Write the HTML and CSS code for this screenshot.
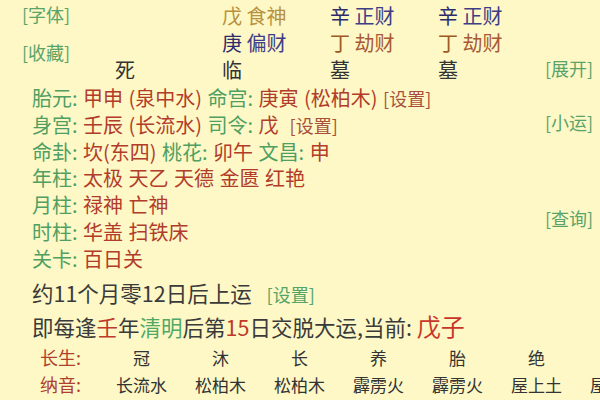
FILE: index.html
```html
<!DOCTYPE html>
<html lang="zh">
<head>
<meta charset="utf-8">
<link rel="stylesheet" href="styles.css">
</head>
<body>
<div class="upper">
  <div class="main">
    <div class="pillars">
      <div class="side">
        <span class="btn">[字体]</span>
        <span class="btn shou">[收藏]</span>
      </div>
      <div class="cell c2 r1"><span class="tan">戊 食神</span></div>
      <div class="cell c3 r1"><span class="navy">辛</span> <span class="navy2">正财</span></div>
      <div class="cell c4 r1"><span class="navy">辛</span> <span class="navy2">正财</span></div>
      <div class="cell c2 r2"><span class="navy">庚</span> <span class="navy2">偏财</span></div>
      <div class="cell c3 r2"><span class="ding">丁</span> <span class="jie">劫财</span></div>
      <div class="cell c4 r2"><span class="ding">丁</span> <span class="jie">劫财</span></div>
      <div class="cell c1 r3 dark">死</div>
      <div class="cell c2 r3 dark">临</div>
      <div class="cell c3 r3 dark">墓</div>
      <div class="cell c4 r3 dark">墓</div>
    </div>
    <div class="info">
      <div class="row"><span class="lb">胎元:</span> <span class="val">甲申 (泉中水)</span> <span class="lb">命宫:</span> <span class="val">庚寅 (松柏木)</span> <span class="set">[设置]</span></div>
      <div class="row"><span class="lb">身宫:</span> <span class="val">壬辰 (长流水)</span> <span class="lb">司令:</span> <span class="val">戊</span>&nbsp; <span class="set">[设置]</span></div>
      <div class="row"><span class="lb">命卦:</span> <span class="val">坎(东四)</span> <span class="lb">桃花:</span> <span class="val">卯午</span> <span class="lb">文昌:</span> <span class="val">申</span></div>
      <div class="row"><span class="lb">年柱:</span> <span class="val">太极 天乙 天德 金匮 红艳</span></div>
      <div class="row"><span class="lb">月柱:</span> <span class="val">禄神 亡神</span></div>
      <div class="row"><span class="lb">时柱:</span> <span class="val">华盖 扫铁床</span></div>
      <div class="row"><span class="lb">关卡:</span> <span class="val">百日关</span></div>
    </div>
  </div>
  <div class="aside">
    <span class="btn zk">[展开]</span>
    <span class="btn xy">[小运]</span>
    <span class="btn cx">[查询]</span>
  </div>
</div>
<div class="yun">
  <div class="line">约11个月零12日后上运 <span class="gset">[设置]</span></div>
  <div class="line">即每逢<span class="red">壬</span>年<span class="grn">清明</span>后第<span class="red">15</span>日交脱大运,当前: <span class="cur">戊子</span></div>
</div>
<div class="table">
  <div class="tl">长生:</div>
  <div class="td">冠</div><div class="td">沐</div><div class="td">长</div><div class="td">养</div><div class="td">胎</div><div class="td">绝</div><div class="td"></div>
  <div class="tl">纳音:</div>
  <div class="td">长流水</div><div class="td">松柏木</div><div class="td">松柏木</div><div class="td">霹雳火</div><div class="td">霹雳火</div><div class="td">屋上土</div><div class="td">屋上土</div>
</div>
</body>
</html>
```

FILE: styles.css
```css
html, body {
  margin: 0;
  padding: 0;
  overflow: hidden;
}
body {
  width: 600px;
  height: 400px;
  background: #fdf8c6;
  font-family: "Noto Sans CJK SC", "Noto Sans", sans-serif;
  font-size: 20px;
  color: #333;
}
.upper {
  display: flex;
}
.main {
  width: 545px;
  flex: none;
}
.pillars {
  display: grid;
  grid-template-columns: 115px 107px 108px 108px 107px;
  grid-template-rows: 27px 27px 28px;
  padding-top: 2px;
  line-height: 27px;
}
.side {
  grid-column: 1;
  grid-row: 1 / span 3;
  display: flex;
  flex-direction: column;
  align-items: flex-start;
  padding-left: 22px;
}
.btn {
  color: #5aa46a;
  font-size: 18px;
  line-height: 24px;
}
.shou {
  margin-top: 14px;
}
.cell { white-space: nowrap; }
.c1 { grid-column: 2; }
.c2 { grid-column: 3; }
.c3 { grid-column: 4; }
.c4 { grid-column: 5; }
.r1 { grid-row: 1; }
.r2 { grid-row: 2; }
.r3 { grid-row: 3; }
.tan { color: #b8913e; }
.navy { color: #2c2c6c; }
.navy2 { color: #3e3e86; }
.ding { color: #9c5a22; }
.jie { color: #a85a36; }
.dark { color: #333; }
.info {
  padding-left: 32px;
  padding-top: 1px;
}
.row {
  line-height: 26.8px;
  white-space: nowrap;
  word-spacing: 1px;
}
.lb { color: #4f9f62; }
.val { color: #b23c2a; }
.set { color: #a9503c; font-size: 18px; }
.aside {
  display: flex;
  flex-direction: column;
  align-items: flex-start;
  padding-top: 56px;
}
.xy { margin-top: 30px; }
.cx { margin-top: 72px; }
.yun {
  padding-left: 32px;
  margin-top: 4px;
  font-size: 21.5px;
  color: #3a3a3a;
}
.line {
  line-height: 31px;
  white-space: nowrap;
}
.gset { color: #55a467; font-size: 18px; margin-left: 10px; }
.red { color: #c0392b; }
.grn { color: #4fa866; }
.cur { color: #c8362a; font-size: 24px; }
.table {
  display: grid;
  grid-template-columns: 62px repeat(7, 79px);
  grid-auto-rows: 27px;
  padding-left: 40px;
  margin-top: 2px;
  line-height: 27px;
  font-size: 17px;
  color: #333;
}
.tl { color: #b0402e; font-size: 18px; }
.td { text-align: center; white-space: nowrap; }
```
